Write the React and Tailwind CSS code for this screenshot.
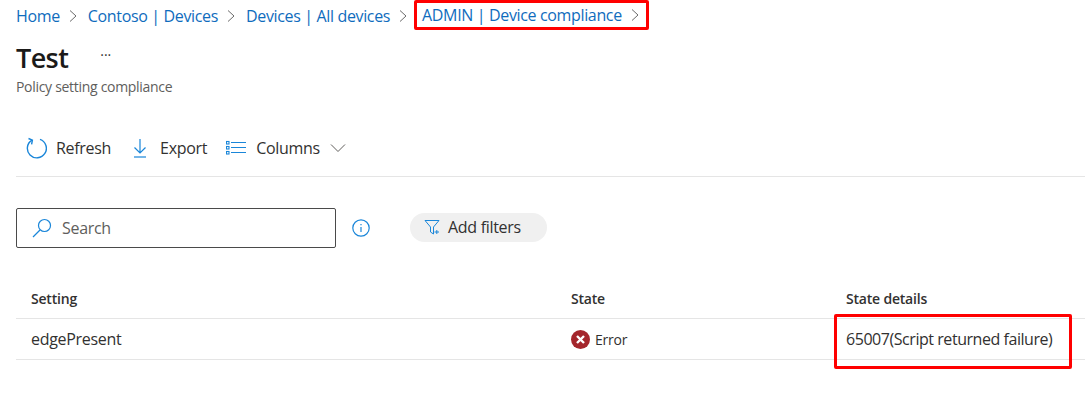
import React from "react";

const font = { fontFamily: '"Open Sans", "Noto Sans", sans-serif' };

const Chevron = () => (
  <svg width="10" height="14" viewBox="0 0 10 14" fill="none" stroke="#6b6b6b" strokeWidth="1" className="shrink-0">
    <path d="M2 1.5 L8 7 L2 12.5" />
  </svg>
);

const Crumb = ({ children, className = "" }) => (
  <a className={`text-[#0f6cbd] whitespace-nowrap tracking-[-0.35px] ${className}`}>{children}</a>
);

const ToolButton = ({ icon, label, className = "" }) => (
  <button className={`flex items-center text-[16px] tracking-[-0.3px] text-[#323130] ${className}`}>
    {icon}
    {label}
  </button>
);

const App = () => {
  return (
    <div className="w-[1085px] h-[408px] bg-white overflow-hidden pl-4 font-['Open_Sans'] relative">
      {/* breadcrumb */}
      <div className="flex items-center h-8 text-[16px]">
        <Crumb>Home</Crumb>
        <span className="ml-[8px] mr-[10px]"><Chevron /></span>
        <Crumb>Contoso | Devices</Crumb>
        <span className="ml-[8px] mr-[10px]"><Chevron /></span>
        <Crumb>Devices | All devices</Crumb>
        <span className="ml-[8px] mr-[8px]"><Chevron /></span>
        <div className="flex items-center h-[30px] -mt-[2px] border-[3px] border-[#ff0000] rounded-[2px] pl-[5px] pr-[6px] -ml-[2px]">
          <Crumb>ADMIN | Device compliance</Crumb>
          <span className="ml-[8px]"><Chevron /></span>
        </div>
      </div>

      {/* title */}
      <div className="flex items-center mt-[6px] h-[38px]">
        <h1 className="text-[27px] font-semibold text-[#1b1a19] tracking-[-0.6px] leading-none">Test</h1>
        <span className="ml-[32px] text-[#323130] text-[14px] leading-none -mt-1">···</span>
      </div>
      <p className="text-[14px] tracking-[-0.3px] text-[#605e5c] mt-[1px] leading-5">Policy setting compliance</p>

      {/* toolbar */}
      <div className="flex items-center h-[40px] mt-[31px] pl-[9px] mr-0">
        <ToolButton
          label="Refresh"
          icon={
            <svg width="22" height="22" viewBox="0 0 22 22" fill="none" stroke="#1a86d9" strokeWidth="1.4" className="mr-[9px]">
              <path d="M7 3.2 A9.5 9.5 0 1 0 15 2.4" />
              <path d="M3.5 1.5 L7.4 3.2 L6.6 7.4" />
            </svg>
          }
        />
        <ToolButton
          className="ml-[21px]"
          label="Export"
          icon={
            <svg width="16" height="20" viewBox="0 0 16 20" fill="none" stroke="#1a86d9" strokeWidth="1.2" className="mr-[12px]">
              <path d="M8 1 V15 M2.5 9.5 L8 15 L13.5 9.5" />
              <path d="M2 19 H14" />
            </svg>
          }
        />
        <ToolButton
          className="ml-[19px]"
          label="Columns"
          icon={
            <svg width="20" height="16" viewBox="0 0 20 16" fill="none" stroke="#1a86d9" strokeWidth="1.1" className="mr-[10px]">
              <rect x="0.5" y="1.5" width="2.5" height="2.5" />
              <rect x="0.5" y="6.5" width="2.5" height="2.5" />
              <rect x="0.5" y="11.5" width="2.5" height="2.5" />
              <path d="M5 2.5 H20 M5 7.5 H20 M5 12.5 H20" />
            </svg>
          }
        />
        <svg width="16" height="10" viewBox="0 0 16 10" fill="none" stroke="#605e5c" strokeWidth="1" className="ml-[10px]">
          <path d="M1 1.5 L8 8.5 L15 1.5" />
        </svg>
      </div>
      <div className="h-px bg-[#e5e5e5] mt-[8px]" />

      {/* search + filters */}
      <div className="flex items-center mt-[31px] h-[40px]">
        <div className="flex items-center w-[320px] h-[40px] border border-[#4a4a4a] rounded-[2px] pl-[15px]">
          <svg width="20" height="20" viewBox="0 0 20 20" fill="none" stroke="#1a86d9" strokeWidth="1.2" className="mr-[10px]">
            <circle cx="12.5" cy="7.5" r="6" />
            <path d="M8 12 L1 19" />
          </svg>
          <span className="text-[16px] tracking-[-0.3px] text-[#605e5c]">Search</span>
        </div>
        <svg width="18" height="18" viewBox="0 0 18 18" fill="none" stroke="#1a86d9" strokeWidth="1.2" className="ml-[16px]">
          <circle cx="9" cy="9" r="8.2" />
          <path d="M9 8 V13" />
          <path d="M9 5 V6.2" />
        </svg>
        <button className="flex items-center h-[29px] w-[137px] ml-[40px] -mt-[2px] rounded-full bg-[#f0f0f0] pl-[14px] text-[16px] tracking-[-0.3px] text-[#323130]">
          <svg width="16" height="16" viewBox="0 0 16 16" fill="none" stroke="#1a86d9" strokeWidth="1" className="mr-[8px]">
            <path d="M1 1.5 H15 L9.5 8 V15 L6.5 13 V8 Z" />
            <path d="M10.5 13 H15 M12.8 11 V15" />
          </svg>
          Add filters
        </button>
      </div>

      {/* table */}
      <div className="mt-[30px] text-[14px] tracking-[-0.2px]">
        <div className="grid grid-cols-[540px_275px_1fr] h-[41px] items-center pl-[15px] font-semibold text-[#323130] border-b border-[#e5e5e5]">
          <span className="text-[14px]">Setting</span>
          <span>State</span>
          <span>State details</span>
        </div>
        <div className="grid grid-cols-[540px_275px_1fr] h-[41px] items-center pl-[15px] text-[#323130] border-b border-[#e5e5e5]">
          <span className="text-[16px] tracking-[-0.3px]">edgePresent</span>
          <span className="flex items-center">
            <svg width="19" height="19" viewBox="0 0 19 19" className="mr-[5px]">
              <circle cx="9.5" cy="9.5" r="9.5" fill="#a4262c" />
              <path d="M6 6 L13 13 M13 6 L6 13" stroke="#fff" strokeWidth="2.4" />
            </svg>
            <span>Error</span>
          </span>
          <span className="relative text-[16px] tracking-[-0.45px] whitespace-nowrap">
            65007(Script returned failure)
            <span className="absolute -left-[12px] -top-[13px] w-[238px] h-[55px] border-[3px] border-[#ff0000] rounded-[2px]" />
          </span>
        </div>
      </div>
    </div>
  );
};

export default App;
